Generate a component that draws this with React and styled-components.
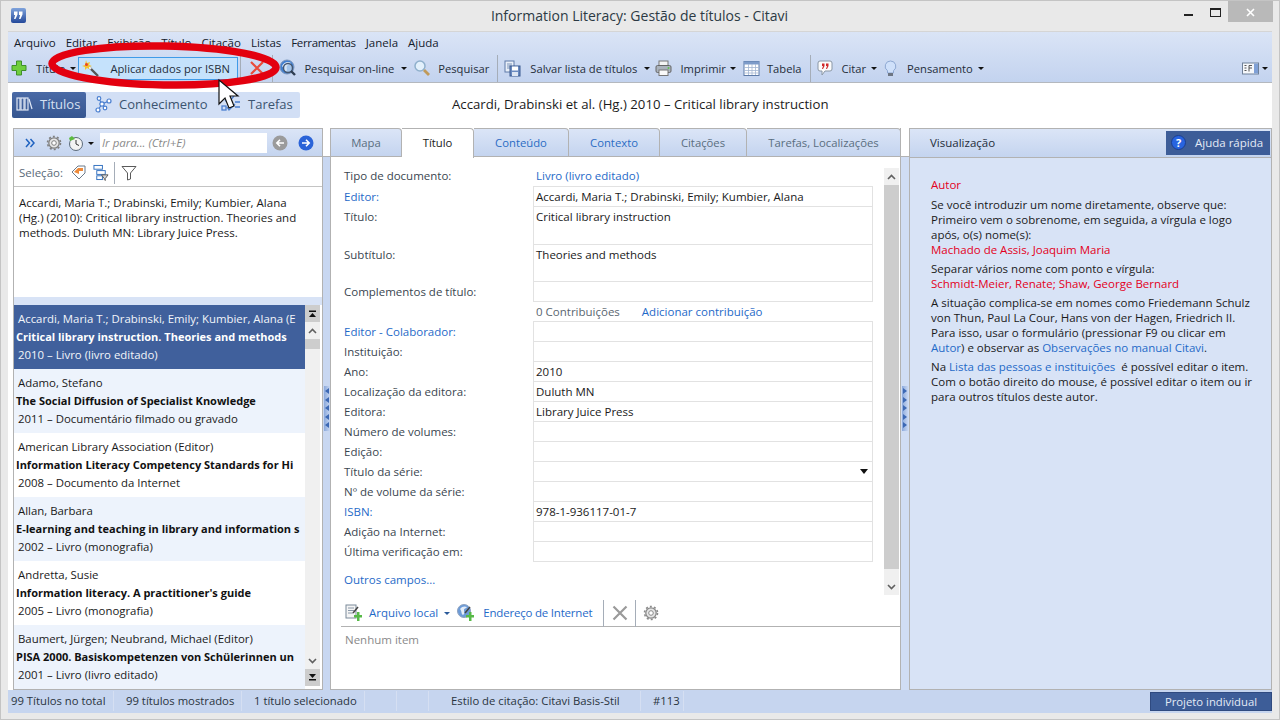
import React from "react";
import styled, { createGlobalStyle } from "styled-components";

const Global = createGlobalStyle`
  html, body { margin: 0; padding: 0; background: #e9e9e9; }
  * { box-sizing: border-box; }
  body { font-family: "Open Sans", "Noto Sans", sans-serif; font-size: 11.5px; color: #1a1a1a; }
`;

const Window = styled.div`
  position: relative; width: 1280px; height: 720px; overflow: hidden;
  background: #e9e9e9; border: 1px solid #c4c4c4;
  display: flex; flex-direction: column;
`;
const TitleBar = styled.div`
  height: 30px; flex: none; display: grid; grid-template-columns: 1fr auto 1fr; align-items: start; padding-left: 10px;
`;
const AppIcon = styled.svg`display: block; margin-top: 7px;`;
const TitleText = styled.div`
  text-align: center; font-size: 14px; line-height: 30px; color: #2c3a44; white-space: nowrap; margin-left: -11px;
`;
const WinBtns = styled.div`display: flex; align-items: flex-start; margin-right: 6px; justify-self: end;`;
const WinBtn = styled.div`
  width: ${p => p.$w}px; height: 21px; display: flex; align-items: flex-start; padding-top: ${p => p.$pt}px;
  justify-content: ${p => p.$close ? "center" : "flex-start"};
  background: ${p => p.$close ? "#b9b9b9" : "transparent"};
`;
const Frame = styled.div`
  flex: 1; margin: 0 7px 6px 7px; background: #fff; display: flex; flex-direction: column; min-height: 0;
`;
const TopBars = styled.div`
  background: linear-gradient(#dae4f6, #c3d3ef); border-top: 1px solid #d5d5d5; border-bottom: 1px solid #b4b8be; flex: none; height: 52px;
`;
const MenuBar = styled.div`
  display: flex; height: 21px; align-items: center; padding-left: 6px; gap: 10px;
`;
const MenuItem = styled.span`
  color: #14202c; white-space: nowrap; font-size: 11.5px; letter-spacing: ${p => p.$tight ? "-0.35px" : "0"};
`;
const ToolBar = styled.div`display: flex; align-items: center; height: 30px; padding-left: 3px;`;
const ToolText = styled.span`
  white-space: nowrap; margin-left: ${p => p.$ml || 0}px; color: #1f2d3a; font-size: 11.2px;
`;
const Caret = styled.span`
  width: 0; height: 0; flex: none; margin-left: ${p => p.$ml ?? 6}px; margin-right: ${p => p.$mr || 0}px; margin-top: 1px;
  border-left: 3px solid transparent; border-right: 3px solid transparent; border-top: 3px solid ${p => p.$c || "#111"};
`;
const ToolSep = styled.span`
  width: 1px; height: ${p => p.$h || 27}px; background: #a5adb8; flex: none; margin: 1px ${p => p.$mr ?? 6}px 0 ${p => p.$ml ?? 6}px;
`;
const IconSlot = styled.span`
  display: inline-flex; flex: none; margin-left: ${p => p.$ml || 0}px; width: ${p => p.$w || 16}px; height: 16px; align-items: center; justify-content: center;
`;
const ApplyBtn = styled.div`
  width: 160px; height: 23px; display: flex; align-items: center; flex: none; margin: 1px 0 0 2px; padding-left: 3px;
  background: #c5e2fc; border: 1px solid #3f9be8; white-space: nowrap;
`;
const Spacer = styled.div`flex: 1;`;

const NavRow = styled.div`
  height: 45px; flex: none; position: relative; display: flex; align-items: center; padding-left: 4px;
`;
const NavGroup = styled.div`
  display: flex; align-items: center; height: 26px; width: 288px; background: #d2dff5; border-radius: 2px; margin-top: -2px;
`;
const NavTab = styled.div`
  display: flex; align-items: center; height: 26px; font-size: 13px; white-space: nowrap; gap: ${p => p.$gap || 7}px;
  width: ${p => p.$w}px; padding: 0 0 2px ${p => p.$pl || 4}px; border-radius: 2px;
  color: ${p => p.$active ? "#d6e0f2" : "#3c5470"};
  background: ${p => p.$active ? "linear-gradient(#4a6aa6,#365690)" : "transparent"};
`;
const DocTitle = styled.div`
  position: absolute; left: 444px; top: 12px; font-size: 13.2px; white-space: nowrap; color: #1b1b1b;
`;

const Main = styled.div`flex: 1; display: flex; min-height: 0; padding-left: 5px;`;
const LeftPanel = styled.div`
  width: 310px; flex: none; border: 1px solid #b2b2b2; display: flex; flex-direction: column; background: #fff;
`;
const PanelHead = styled.div`
  height: 28px; flex: none; display: flex; align-items: center; background: linear-gradient(#dbe5f7, #c4d4ef); border-bottom: 1px solid #b2b2b2;
`;
const GoBox = styled.div`
  width: 167px; height: 20px; margin-left: 6px; background: #fff; color: #8a8a8a; font-style: italic; padding-left: 2px; line-height: 20px;
`;
const SelRow = styled.div`
  height: 30px; flex: none; display: flex; align-items: center; padding: 2px 0 0 5px; color: #5a6a78; border-bottom: 1px solid #c4c4c4;
`;
const Preview = styled.div`
  height: 110px; flex: none; padding: 8px 5px; line-height: 15px; white-space: nowrap; color: #1a1a1a;
`;
const SplitH = styled.div`height: 8px; flex: none; background: #d8e3f6;`;
const ListWrap = styled.div`flex: 1; display: flex; min-height: 0; overflow: hidden;`;
const List = styled.div`width: 291px; flex: none; overflow: hidden;`;
const Item = styled.div`
  height: 64px; padding: 5px 0 0 4px; line-height: 18px; overflow: hidden; white-space: nowrap; font-size: 11.4px;
  background: ${p => p.$sel ? "#40609c" : p.$alt ? "#edf3fc" : "#fff"};
  color: ${p => p.$sel ? "#f2f5fa" : "#1a1a1a"};
`;
const ItemTitle = styled.div`font-weight: 700; margin-left: -2px; font-size: 11px; color: ${p => p.$sel ? "#fff" : "#111"};`;
const VScroll = styled.div`
  width: 15px; flex: none; background: #f0f0f0; display: flex; flex-direction: column; margin: ${p => p.$m || "0"};
`;
const SBtn = styled.div`
  height: ${p => p.$h || 17}px; flex: none; display: flex; align-items: center; justify-content: center;
  background: ${p => p.$dark ? "#cdcdcd" : "transparent"};
`;
const SThumb = styled.div`height: ${p => p.$h}px; flex: none; background: #cdcdcd;`;
const SFill = styled.div`flex: 1;`;

const Gutter = styled.div`
  width: ${p => p.$w}px; flex: none; display: flex; flex-direction: column;
`;
const GutterTop = styled.div`height: 29px; flex: none; background: #fff; border-bottom: 1px solid #b2b2b2;`;
const GutterBody = styled.div`
  flex: 1; background: ${p => p.$c || "#c8d7f1"}; display: flex; align-items: center; justify-content: center; padding-bottom: 31px;
`;
const Grip = styled.div`
  width: 6px; height: 45px; background: linear-gradient(90deg, #8aa8dc, #c8d7f1); display: flex; flex-direction: column; align-items: center; justify-content: space-evenly;
`;
const GripArrow = styled.span`
  width: 0; height: 0; border-top: 3px solid transparent; border-bottom: 3px solid transparent;
  ${p => p.$right ? "border-left: 4px solid #3c68b4;" : "border-right: 4px solid #3c68b4;"}
`;

const CenterPanel = styled.div`
  width: 571px; flex: none; display: flex; flex-direction: column; border-left: 1px solid #b2b2b2; border-bottom: 1px solid #b2b2b2; border-right: 1px solid #b2b2b2; background: #fff;
`;
const Tabs = styled.div`display: flex; height: 29px; flex: none; margin-right: -1px;`;
const Tab = styled.div`
  width: ${p => p.$w}px; flex: none; height: ${p => p.$active ? 30 : 29}px; text-align: center; line-height: 28px; white-space: nowrap; font-size: 11.3px; z-index: ${p => p.$active ? 1 : 0};
  border: 1px solid #b2b2b2; border-left-width: 0; border-bottom: ${p => p.$active ? "none" : "1px solid #b2b2b2"};
  border-radius: 0 4px 0 0;
  background: ${p => p.$active ? "#fff" : "linear-gradient(#dbe5f7, #c4d4ef)"};
  color: ${p => p.$active ? "#1a1a1a" : p.$blue ? "#2a6cc4" : "#5a6e80"};
`;
const FormArea = styled.div`flex: 1; display: flex; min-height: 0; padding: 9px 1px 0 13px;`;
const FormCol = styled.div`flex: 1; min-width: 0;`;
const Grid = styled.div`display: grid; grid-template-columns: 189px 340px; width: 529px;`;
const Label = styled.div`
  height: ${p => p.$h || 20}px; line-height: 20px; white-space: nowrap; color: ${p => p.$link ? "#1f6ac8" : "#3a4650"};
`;
const Field = styled.div`
  height: ${p => (p.$h || 20) + 1}px; border: 1px solid #e2e2e2; margin-top: -1px; padding-left: 2px; line-height: 19px; white-space: nowrap; color: #1a1a1a; display: flex;
`;
const FieldPlain = styled.div`height: 21px; line-height: 20px; color: #1f6ac8; padding-left: 3px;`;
const ContribRow = styled.div`height: 20px; line-height: 20px; white-space: nowrap; padding-left: 3px; color: #5a6670; display: flex; gap: 22px;`;
const LinkText = styled.span`
  color: #1f6ac8; white-space: nowrap; margin-left: ${p => p.$ml || 0}px; letter-spacing: ${p => p.$tight ? "-0.2px" : "0"};
`;
const DropTri = styled.span`
  width: 0; height: 0; margin: 7px 4px 0 auto; border-left: 4px solid transparent; border-right: 4px solid transparent; border-top: 5px solid #111;
`;
const More = styled.div`margin-top: 10px; color: #1f6ac8;`;
const AttachBar = styled.div`
  height: 28px; flex: none; margin-left: 10px; display: flex; align-items: center; border-bottom: 1px solid #b2b2b2; padding-left: 4px;
`;
const None = styled.div`height: 62px; flex: none; padding: 5px 0 0 14px; color: #8a8a8a; line-height: 16px;`;

const RightPanel = styled.div`
  width: 363px; flex: none; display: flex; flex-direction: column; border: 1px solid #b2b2b2; background: #d8e3f6;
`;
const RightHead = styled.div`
  height: 29px; flex: none; display: flex; align-items: center; justify-content: space-between; padding: 0 1px 1px 20px;
  background: linear-gradient(#dbe5f7, #c4d4ef); border-bottom: 1px solid #b2b2b2; color: #1f2d3a;
`;
const HelpBtn = styled.div`
  width: 104px; height: 24px; background: #3d5d98; color: #e4ebf6; display: flex; align-items: center; padding-left: 5px; gap: 9px; white-space: nowrap;
`;
const RightBody = styled.div`padding: 19px 0 0 21px; line-height: 15px; white-space: nowrap; color: #1a1a1a;`;
const Para = styled.p`margin: 0 0 4px;`;
const RedHead = styled.p`margin: 0 0 5px; color: #e30022;`;
const Red = styled.span`color: #e30022;`;
const Blue = styled.span`color: #1f6ac8;`;

const StatusBar = styled.div`
  height: 23px; flex: none; background: #c6d5ef; display: flex; align-items: center; padding: 0 0 1px 3px; color: #2a3440; white-space: nowrap; font-size: 11.3px;
`;
const StatusCell = styled.div`
  width: ${p => p.$w}px; flex: none; height: 20px; line-height: 20px; border-right: 1px solid #d5dff2; padding-left: ${p => p.$pl || 0}px;
`;
const ProjectBtn = styled.div`
  margin-left: auto; width: 122px; height: 19px; line-height: 17px; text-align: center; background: #3d5d98; border: 1px solid #2f4a80; color: #e4ebf6;
`;
const Ellipse = styled.svg`position: absolute; left: 44px; top: 36px; pointer-events: none; z-index: 5;`;
const Cursor = styled.svg`position: absolute; left: 216px; top: 77px; pointer-events: none; z-index: 6;`;

/* ------- icons ------- */
const Plus = () => <svg width="16" height="16" viewBox="0 0 16 16"><path d="M5.5 1h5v4.500H15v5h-4.500V15h-5v-4.500H1v-5h4.500z" fill="#6fce3e" stroke="#3f8f2a"/></svg>;
const Wand = () => <svg width="18" height="18" viewBox="0 0 18 18"><path d="M6 6l10 10" stroke="#555" strokeWidth="2.4"/><path d="M6 6l3 3" stroke="#eee" strokeWidth="2.200"/><path d="M4 0l1 3 3-1-1 3 3 1-3 1 0 2-2-1-2 2 0-3-3-1 3-1z" fill="#f4c431"/><circle cx="4.500" cy="4.500" r="1.500" fill="#e8452a"/></svg>;
const RedX = () => <svg width="16" height="16" viewBox="0 0 16 16"><path d="M2 2l12 12M14 2L2 14" stroke="#ea4a3a" strokeWidth="2.200"/></svg>;
const Globe = () => <svg width="18" height="18" viewBox="0 0 18 18"><circle cx="8" cy="8" r="7" fill="#3f7fd0" stroke="#7e97bd"/><path d="M3 7c2-4 6-5 9-3-1 2-3 1-4 3s1 4-1 6c-2-1-2-4-4-6z" fill="#dce9f8"/><circle cx="9" cy="9" r="4.500" fill="#cfe3f7" fillOpacity=".7" stroke="#44566f" strokeWidth="1.400"/><path d="M12 12l4 4" stroke="#2f3e52" strokeWidth="2.400"/></svg>;
const Mag = () => <svg width="18" height="18" viewBox="0 0 18 18"><circle cx="7" cy="7" r="5" fill="#e2f0fb" stroke="#8fb0cc" strokeWidth="1.500"/><path d="M11 11l5 5" stroke="#c09a5a" strokeWidth="2.800"/></svg>;
const SaveList = () => <svg width="17" height="17" viewBox="0 0 17 17"><rect x="1" y="1" width="9" height="11" fill="#e9eff8" stroke="#5e7aa8"/><path d="M3 4h5M3 6h5M3 8h5" stroke="#7b93b8"/><rect x="6" y="6" width="10" height="10" fill="#6a8ac0" stroke="#3a5a90"/><rect x="8" y="6.500" width="6" height="4" fill="#fff"/><rect x="8" y="12" width="6" height="4" fill="#dde6f3"/></svg>;
const Printer = () => <svg width="17" height="17" viewBox="0 0 17 17"><rect x="4" y="1" width="9" height="5" fill="#f4f4f4" stroke="#777"/><rect x="1" y="5.500" width="15" height="7" rx="1.500" fill="#aab2bc" stroke="#666"/><rect x="4" y="10" width="9" height="5.500" fill="#fafafa" stroke="#777"/><circle cx="13.500" cy="8" r="1" fill="#5fc04a"/></svg>;
const TableI = () => <svg width="17" height="17" viewBox="0 0 17 17"><rect x="1" y="1.500" width="15" height="14" fill="#fff" stroke="#5d7ba8"/><rect x="1" y="1.500" width="15" height="3" fill="#7d9bc9"/><path d="M1 7.500h15M1 10.500h15M1 13h15M5.500 4v11M9 4v11M12.500 4v11" stroke="#a3b6d2" strokeWidth=".8"/></svg>;
const Quote = () => <svg width="16" height="17" viewBox="0 0 16 17"><path d="M3 1h10a2 2 0 0 1 2 2v6a2 2 0 0 1-2 2H8l-3 4v-4H3a2 2 0 0 1-2-2V3a2 2 0 0 1 2-2z" fill="#fbfbfb" stroke="#8a97a6"/><path d="M5 3.500h2.500v2.500L6 9H5l1-3H5zM9 3.500h2.500v2.500L10 9H9l1-3H9z" fill="#d02828"/></svg>;
const Bulb = () => <svg width="13" height="17" viewBox="0 0 13 17"><path d="M6.500 1a5.300 5.300 0 0 1 3 9.700V13h-6v-2.300A5.300 5.300 0 0 1 6.500 1z" fill="#cfe0fa" stroke="#8ea8d2"/><rect x="4" y="13" width="5" height="3" fill="#6d7683"/></svg>;
const ViewI = () => <svg width="17" height="14" viewBox="0 0 17 14"><rect x=".5" y="2" width="16" height="11" fill="#f6f8fb" stroke="#6f8199"/><rect x="12" y="2.500" width="4" height="10" fill="#7fa0d6"/><path d="M2.500 4.500h2M2.500 7h2M2.500 9.500h2M7 4.500h3M7 7h3M7 4.500v6" stroke="#555" fill="none"/></svg>;
const Shelf = () => <svg width="17" height="16" viewBox="0 0 17 16"><g fill="none" stroke="#dfe7f4" strokeWidth="1.200"><rect x="1" y="2" width="3" height="12"/><rect x="5" y="2" width="3" height="12"/><rect x="9" y="2" width="3" height="12"/><path d="M13 3l3 10"/></g></svg>;
const Nodes = () => <svg width="18" height="18" viewBox="0 0 18 18"><g stroke="#4a7fd0" fill="#fff" strokeWidth="1.200"><path d="M4 15L8 9l7-3M8 9L5 4M8 9l3 4" fill="none"/><circle cx="4" cy="15" r="2"/><circle cx="8" cy="9" r="2.200"/><circle cx="15" cy="6" r="2"/><circle cx="5" cy="3.500" r="1.800"/><circle cx="11" cy="13" r="1.800"/></g></svg>;
const Tasks = () => <svg width="20" height="18" viewBox="0 0 20 18"><g stroke="#4a7fd0" fill="none" strokeWidth="1.300"><path d="M4 5l3 3 6-7M6 12l2 3 6-6M14 7h5M14 12h5"/><rect x="1" y="11" width="4" height="4"/></g></svg>;
const Chevrons = () => <svg width="10" height="10" viewBox="0 0 10 10"><path d="M1 1l3.500 4L1 9M5.500 1L9 5 5.500 9" fill="none" stroke="#1f62c0" strokeWidth="1.500"/></svg>;
const Gear = ({ c = "#7f7f7f" }) => <svg width="16" height="16" viewBox="0 0 16 16"><circle cx="8" cy="8" r="5.200" fill="#e6e6e6" stroke={c} strokeWidth="1.300"/><circle cx="8" cy="8" r="6.500" fill="none" stroke={c} strokeWidth="1.600" strokeDasharray="2 2.100"/><circle cx="8" cy="8" r="2.300" fill="#fff" stroke={c}/></svg>;
const History = () => <svg width="16" height="16" viewBox="0 0 16 16"><circle cx="8" cy="9" r="6.500" fill="#f3f3f3" stroke="#5b6a7a"/><path d="M8 5v4l3 1.500" fill="none" stroke="#333"/><path d="M1 3l3-2 3 3-5 2z" fill="#5cbb3f"/></svg>;
const BackBtn = () => <svg width="16" height="16" viewBox="0 0 16 16"><circle cx="8" cy="8" r="7.500" fill="#9b9b9b"/><path d="M12 8H5M8 4.800L4.800 8 8 11.200" fill="none" stroke="#fff" strokeWidth="1.600"/></svg>;
const FwdBtn = () => <svg width="16" height="16" viewBox="0 0 16 16"><circle cx="8" cy="8" r="7.500" fill="#2a63d8"/><path d="M4 8h7M8 4.800L11.200 8 8 11.200" fill="none" stroke="#fff" strokeWidth="1.600"/></svg>;
const TagI = () => <svg width="16" height="17" viewBox="0 0 16 17"><path d="M1 8l6-6h7v7l-6 6z" fill="#fff" stroke="#6b7a8a"/><path d="M3 8l4-4h5v3H8v3z" fill="#ee8a3a"/></svg>;
const TreeI = () => <svg width="17" height="17" viewBox="0 0 17 17"><g fill="#fff" stroke="#2f6fbf"><rect x="1" y="1" width="9" height="4"/><rect x="4" y="6.500" width="9" height="4"/><rect x="4" y="12" width="6" height="4"/></g><path d="M9 11h7l-3 4v2l-1-1v-1z" fill="#d8d8d8" stroke="#555"/></svg>;
const Funnel = () => <svg width="16" height="16" viewBox="0 0 16 16"><path d="M1 1.500h14L9.500 8v6l-3 1V8z" fill="#fff" stroke="#5a5a5a"/></svg>;
const DocClip = () => <svg width="17" height="17" viewBox="0 0 17 17"><rect x="1" y="1" width="10" height="13" fill="#f5f5f5" stroke="#7a8a9a"/><path d="M3 4h6M3 6.500h6M3 9h5" stroke="#8a98a8"/><path d="M8 9l5-6" stroke="#444" strokeWidth="1.500"/><path d="M9 11h3V8h2.500v3H17v2.500h-2.500V17H12v-3.500H9z" fill="#57b947"/></svg>;
const GlobeClip = () => <svg width="17" height="17" viewBox="0 0 17 17"><circle cx="7" cy="7" r="6.500" fill="#6c9bd8" stroke="#8ea2bf"/><path d="M3 5c2-3 5-3 7-2-1 2-3 1-3 3s1 4-1 5c-2-1-1-4-3-6z" fill="#e4edf8"/><path d="M8 9l5-6" stroke="#444" strokeWidth="1.500"/><path d="M9 11h3V8h2.500v3H17v2.500h-2.500V17H12v-3.500H9z" fill="#57b947"/></svg>;
const GrayX = () => <svg width="16" height="16" viewBox="0 0 16 16"><path d="M1.500 1.500l13 13M14.500 1.500l-13 13" stroke="#9a9a9a" strokeWidth="2.200"/></svg>;
const ScrollChev = ({ down }) => <svg width="9" height="6" viewBox="0 0 9 6"><path d={down ? "M1 1l3.500 3.500L8 1" : "M1 5l3.500-3.500L8 5"} fill="none" stroke="#606060" strokeWidth="1.600"/></svg>;
const ScrollEnd = ({ down }) => <svg width="9" height="7" viewBox="0 0 9 7">{down ? <><path d="M1 0h7L4.500 4z" fill="#111"/><rect x="1" y="5" width="7" height="1.500" fill="#111"/></> : <><rect x="1" y=".5" width="7" height="1.500" fill="#111"/><path d="M1 7h7L4.500 3z" fill="#111"/></>}</svg>;
const HelpI = () => <svg width="15" height="15" viewBox="0 0 15 15"><circle cx="7.500" cy="7.500" r="7" fill="#2864e0" stroke="#1c3f8f"/><text x="7.500" y="11.500" textAnchor="middle" fontSize="11" fontWeight="700" fill="#fff" fontFamily="Open Sans">?</text></svg>;

const items = [
  ["Accardi, Maria T.; Drabinski, Emily; Kumbier, Alana (E", "Critical library instruction. Theories and methods", "2010 – Livro (livro editado)"],
  ["Adamo, Stefano", "The Social Diffusion of Specialist Knowledge", "2011 – Documentário filmado ou gravado"],
  ["American Library Association (Editor)", "Information Literacy Competency Standards for Hi", "2008 – Documento da Internet"],
  ["Allan, Barbara", "E-learning and teaching in library and information s", "2002 – Livro (monografia)"],
  ["Andretta, Susie", "Information literacy. A practitioner's guide", "2005 – Livro (monografia)"],
  ["Baumert, Jürgen; Neubrand, Michael (Editor)", "PISA 2000. Basiskompetenzen von Schülerinnen un", "2001 – Livro (livro editado)"],
];
const menus = ["Arquivo", "Editar", "Exibição", "Título", "Citação", "Listas", "Ferramentas", "Janela", "Ajuda"];
const tabs = [
  ["Mapa", 71], ["Título", 72, "active"], ["Conteúdo", 95, "blue"], ["Contexto", 91, "blue"], ["Citações", 87], ["Tarefas, Localizações", 154],
];
const fields = [
  ["Editor:", "Accardi, Maria T.; Drabinski, Emily; Kumbier, Alana", 20, true],
  ["Título:", "Critical library instruction", 38],
  ["Subtítulo:", "Theories and methods", 37],
  ["Complementos de título:", "", 20],
];
const fields2 = [
  ["Editor - Colaborador:", "", true],
  ["Instituição:", ""],
  ["Ano:", "2010"],
  ["Localização da editora:", "Duluth MN"],
  ["Editora:", "Library Juice Press"],
  ["Número de volumes:", ""],
  ["Edição:", ""],
  ["Título da série:", "", false, true],
  ["Nº de volume da série:", ""],
  ["ISBN:", "978-1-936117-01-7", true],
  ["Adição na Internet:", ""],
  ["Última verificação em:", ""],
];

export default function App() {
  return (
    <Window>
      <Global />
      <TitleBar>
        <AppIcon width="15" height="15" viewBox="0 0 15 15">
          <defs><linearGradient id="appg" x1="0" y1="0" x2="0" y2="1"><stop offset="0" stopColor="#7fa3dc" /><stop offset="1" stopColor="#24499a" /></linearGradient></defs>
          <rect width="15" height="15" rx="2" fill="url(#appg)" />
          <path d="M3 3.500h3.500v3L4.500 11H3l1.200-4H3zM8 3.500h3.500v3L9.500 11H8l1.200-4H8z" fill="#fff" />
        </AppIcon>
        <TitleText>Information Literacy: Gestão de títulos - Citavi</TitleText>
        <WinBtns>
          <WinBtn $w={26} $pt={12}><svg width="9" height="3"><rect width="9" height="2" y="1" fill="#222" /></svg></WinBtn>
          <WinBtn $w={18} $pt={7}><svg width="11" height="9"><rect x=".5" y=".5" width="10" height="8" fill="none" stroke="#222" /><rect width="11" height="2" fill="#222" /></svg></WinBtn>
          <WinBtn $w={45} $pt={7} $close><svg width="9" height="9"><path d="M1 1l7 7M8 1L1 8" stroke="#fff" strokeWidth="1.600" /></svg></WinBtn>
        </WinBtns>
      </TitleBar>
      <Frame>
        <TopBars>
          <MenuBar>{menus.map(m => <MenuItem key={m} $tight={m === "Ferramentas"}>{m}</MenuItem>)}</MenuBar>
          <ToolBar>
            <IconSlot><Plus /></IconSlot>
            <ToolText $ml={9}>Título</ToolText><Caret $ml={5} />
            <ApplyBtn><IconSlot $w={18}><Wand /></IconSlot><ToolText $ml={10}>Aplicar dados por ISBN</ToolText></ApplyBtn>
            <ToolSep $ml={2} $mr={8} />
            <IconSlot><RedX /></IconSlot>
            <ToolSep $ml={7} $mr={6} />
            <IconSlot $w={18}><Globe /></IconSlot>
            <ToolText $ml={7}>Pesquisar on-line</ToolText><Caret $ml={7} />
            <IconSlot $ml={6} $w={18}><Mag /></IconSlot>
            <ToolText $ml={7}>Pesquisar</ToolText>
            <ToolSep $ml={8} $mr={6} />
            <IconSlot $w={17}><SaveList /></IconSlot>
            <ToolText $ml={9}>Salvar lista de títulos</ToolText><Caret $ml={7} />
            <IconSlot $ml={5} $w={17}><Printer /></IconSlot>
            <ToolText $ml={8}>Imprimir</ToolText><Caret $ml={4} />
            <IconSlot $ml={7} $w={17}><TableI /></IconSlot>
            <ToolText $ml={7}>Tabela</ToolText>
            <ToolSep $ml={9} $mr={6} />
            <IconSlot><Quote /></IconSlot>
            <ToolText $ml={8}>Citar</ToolText><Caret $ml={5} />
            <IconSlot $ml={7} $w={13}><Bulb /></IconSlot>
            <ToolText $ml={10}>Pensamento</ToolText><Caret $ml={5} />
            <Spacer />
            <IconSlot $w={17}><ViewI /></IconSlot><Caret $ml={3} $mr={4} />
          </ToolBar>
        </TopBars>
        <NavRow>
          <NavGroup>
            <NavTab $active $w={74}><Shelf />Títulos</NavTab>
            <NavTab $w={128} $pl={8}><Nodes />Conhecimento</NavTab>
            <NavTab $w={86} $pl={7}><Tasks />Tarefas</NavTab>
          </NavGroup>
          <DocTitle>Accardi, Drabinski et al. (Hg.) 2010 – Critical library instruction</DocTitle>
        </NavRow>
        <Main>
          <LeftPanel>
            <PanelHead>
              <IconSlot $ml={10} $w={12}><Chevrons /></IconSlot>
              <IconSlot $ml={10}><Gear /></IconSlot>
              <IconSlot $ml={6}><History /></IconSlot>
              <Caret $ml={4} />
              <GoBox>Ir para... (Ctrl+E)</GoBox>
              <IconSlot $ml={5}><BackBtn /></IconSlot>
              <IconSlot $ml={10}><FwdBtn /></IconSlot>
            </PanelHead>
            <SelRow>
              Seleção:
              <IconSlot $ml={8}><TagI /></IconSlot>
              <IconSlot $ml={6}><TreeI /></IconSlot>
              <ToolSep $ml={5} $mr={6} $h={22} />
              <IconSlot><Funnel /></IconSlot>
            </SelRow>
            <Preview>
              Accardi, Maria T.; Drabinski, Emily; Kumbier, Alana<br />
              (Hg.) (2010): Critical library instruction. Theories and<br />
              methods. Duluth MN: Library Juice Press.
            </Preview>
            <SplitH />
            <ListWrap>
              <List>
                {items.map((it, i) => (
                  <Item key={i} $sel={i === 0} $alt={i % 2 === 1}>
                    <div>{it[0]}</div>
                    <ItemTitle $sel={i === 0}>{it[1]}</ItemTitle>
                    <div>{it[2]}</div>
                  </Item>
                ))}
              </List>
              <VScroll $m="0 0 3px 0">
                <SBtn $dark><ScrollEnd /></SBtn>
                <SBtn><ScrollChev /></SBtn>
                <SThumb $h={10} />
                <SFill />
                <SBtn><ScrollChev down /></SBtn>
                <SBtn $dark><ScrollEnd down /></SBtn>
              </VScroll>
            </ListWrap>
          </LeftPanel>
          <Gutter $w={7}>
            <GutterTop />
            <GutterBody><Grip>{[0,1,2,3,4].map(i => <GripArrow key={i} />)}</Grip></GutterBody>
          </Gutter>
          <CenterPanel>
            <Tabs>
              {tabs.map(([t, w, k]) => <Tab key={t} $w={w} $active={k === "active"} $blue={k === "blue"}>{t}</Tab>)}
            </Tabs>
            <FormArea>
              <FormCol>
                <Grid>
                  <Label>Tipo de documento:</Label><FieldPlain>Livro (livro editado)</FieldPlain>
                  {fields.map(([l, v, h, link]) => (
                    <React.Fragment key={l}><Label $h={h} $link={link}>{l}</Label><Field $h={h}>{v}</Field></React.Fragment>
                  ))}
                  <Label />
                  <ContribRow>0 Contribuições<LinkText>Adicionar contribuição</LinkText></ContribRow>
                  {fields2.map(([l, v, link, drop]) => (
                    <React.Fragment key={l}><Label $link={link}>{l}</Label><Field>{v}{drop && <DropTri />}</Field></React.Fragment>
                  ))}
                </Grid>
                <More>Outros campos...</More>
              </FormCol>
              <VScroll $m="2px 0 4px 0">
                <SBtn><ScrollChev /></SBtn>
                <SThumb $h={384} />
                <SFill />
                <SBtn><ScrollChev down /></SBtn>
              </VScroll>
            </FormArea>
            <AttachBar>
              <IconSlot $w={17}><DocClip /></IconSlot>
              <LinkText $ml={7}>Arquivo local</LinkText><Caret $ml={6} $c="#2a5a9a" />
              <IconSlot $ml={7} $w={17}><GlobeClip /></IconSlot>
              <LinkText $ml={9} $tight>Endereço de Internet</LinkText>
              <ToolSep $ml={11} $mr={8} />
              <IconSlot><GrayX /></IconSlot>
              <ToolSep $ml={7} $mr={7} />
              <IconSlot><Gear c="#8a8a8a" /></IconSlot>
            </AttachBar>
            <None>Nenhum item</None>
          </CenterPanel>
          <Gutter $w={8}>
            <GutterTop />
            <GutterBody $c="#d0ddf4"><Grip>{[0,1,2,3,4].map(i => <GripArrow key={i} $right />)}</Grip></GutterBody>
          </Gutter>
          <RightPanel>
            <RightHead>Visualização<HelpBtn><HelpI />Ajuda rápida</HelpBtn></RightHead>
            <RightBody>
              <RedHead>Autor</RedHead>
              <Para>Se você introduzir um nome diretamente, observe que:<br />Primeiro vem o sobrenome, em seguida, a vírgula e logo<br />após, o(s) nome(s):<br /><Red>Machado de Assis, Joaquim Maria</Red></Para>
              <Para>Separar vários nome com ponto e vírgula:<br /><Red>Schmidt-Meier, Renate; Shaw, George Bernard</Red></Para>
              <Para>A situação complica-se em nomes como Friedemann Schulz<br />von Thun, Paul La Cour, Hans von der Hagen, Friedrich II.<br />Para isso, usar o formulário (pressionar F9 ou clicar em<br /><Blue>Autor</Blue>) e observar as <Blue>Observações no manual Citavi</Blue>.</Para>
              <Para>Na <Blue>Lista das pessoas e instituições</Blue>&nbsp; é possível editar o item.<br />Com o botão direito do mouse, é possível editar o item ou ir<br />para outros títulos deste autor.</Para>
            </RightBody>
          </RightPanel>
        </Main>
        <StatusBar>
          <StatusCell $w={103}>99 Títulos no total</StatusCell>
          <StatusCell $w={128} $pl={12}>99 títulos mostrados</StatusCell>
          <StatusCell $w={123} $pl={12}>1 título selecionado</StatusCell>
          <StatusCell $w={32} />
          <StatusCell $w={32} />
          <StatusCell $w={212} $pl={22}>Estilo de citação: Citavi Basis-Stil</StatusCell>
          <StatusCell $w={43} $pl={12}>#113</StatusCell>
          <ProjectBtn>Projeto individual</ProjectBtn>
        </StatusBar>
      </Frame>
      <Ellipse width="240" height="56" viewBox="0 0 240 56">
        <ellipse cx="119" cy="28.500" rx="112" ry="19.500" fill="none" stroke="#e3000f" strokeWidth="7.500" transform="rotate(1 119 28.500)" />
      </Ellipse>
      <Cursor width="24" height="32" viewBox="0 0 24 32">
        <path d="M2 2v24l6-6 4 10 5-2-4-10h8z" fill="#fff" stroke="#111" strokeWidth="1.200" />
      </Cursor>
    </Window>
  );
}
